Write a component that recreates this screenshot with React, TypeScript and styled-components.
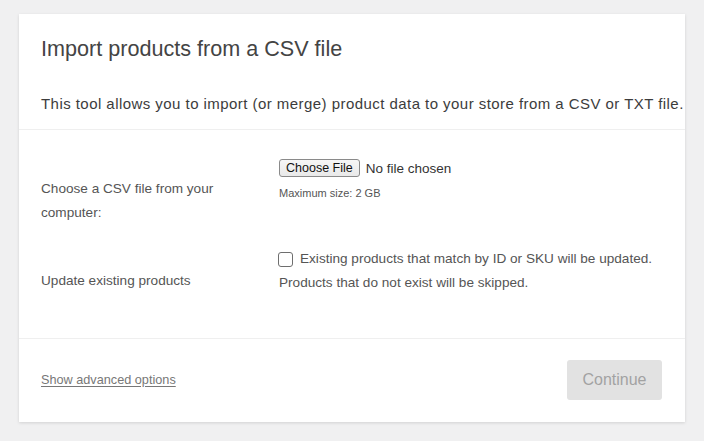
import * as React from 'react'
import styled, { createGlobalStyle } from 'styled-components'

const GlobalStyle = createGlobalStyle`
  html, body {
    margin: 0;
    padding: 0;
    background: #f0f0f1;
    font-family: "Liberation Sans", Arial, sans-serif;
    color: #444;
  }
  * { box-sizing: border-box; }
`

const Page = styled.div`
  padding: 14px 19px 18px;
`

const Card = styled.div`
  background: #fff;
  box-shadow: 0 1px 3px rgba(0, 0, 0, 0.13);
`

const Header = styled.header`
  padding: 21px 22px 0;
  border-bottom: 1px solid #efefef;
`

const Title = styled.h2`
  margin: 0;
  font-size: 21.6px;
  font-weight: 400;
  line-height: 28px;
  color: #444;
`

const Intro = styled.p`
  margin: 30px 0 0;
  padding-bottom: 14px;
  font-size: 15px;
  letter-spacing: 0.45px;
  line-height: 22px;
  color: #3c3c3c;
  white-space: nowrap;
`

const Section = styled.section`
  display: grid;
  grid-template-columns: 238px 1fr;
  row-gap: 22px;
  align-items: start;
  padding: 29px 22px 43px;
`

const Label = styled.label<{ $offset: number }>`
  padding-top: ${p => p.$offset}px;
  width: 180px;
  font-size: 13.6px;
  line-height: 24px;
  color: #555;
`

const Field = styled.div`
  display: flex;
  flex-direction: column;
  font-size: 13.6px;
  color: #555;
`

const FileRow = styled.div`
  display: flex;
  align-items: center;
  gap: 6px;
  height: 18px;
`

const FileButton = styled.button`
  height: 18px;
  padding: 0 6px;
  border: 1px solid #8a8a8a;
  border-radius: 3px;
  background: linear-gradient(#f6f6f6, #e9e9e9);
  font-family: inherit;
  font-size: 12.5px;
  line-height: 16px;
  color: #111;
`

const FileName = styled.span`
  font-size: 13.5px;
  color: #333;
`

const Hint = styled.span`
  margin-top: 9px;
  font-size: 11px;
  line-height: 14px;
  color: #555;
`

const CheckLine = styled.label`
  display: flex;
  align-items: center;
  gap: 7px;
  height: 24px;
  line-height: 24px;
  white-space: nowrap;
`

const Box = styled.span`
  width: 15px;
  height: 15px;
  margin-left: -1px;
  border: 1px solid #6e6e6e;
  border-radius: 3px;
  background: #fff;
  flex: none;
`

const Line = styled.span`
  line-height: 24px;
`

const Footer = styled.footer`
  display: flex;
  align-items: center;
  justify-content: space-between;
  padding: 21px 23px 22px 22px;
  border-top: 1px solid #efefef;
`

const AdvancedLink = styled.a`
  font-size: 12.7px;
  color: #777;
  text-decoration: underline;
  text-underline-offset: 2px;
`

const ContinueButton = styled.button`
  width: 95px;
  height: 40px;
  border: none;
  border-radius: 3px;
  background: #e2e2e2;
  font-family: inherit;
  font-size: 16px;
  color: #a2a2a2;
`

export default function App() {
  return (
    <>
      <GlobalStyle />
      <Page>
        <Card>
          <Header>
            <Title>Import products from a CSV file</Title>
            <Intro>
              This tool allows you to import (or merge) product data to your store from a CSV or TXT file.
            </Intro>
          </Header>
          <Section>
            <Label $offset={18}>Choose a CSV file from your computer:</Label>
            <Field>
              <FileRow>
                <FileButton type="button">Choose File</FileButton>
                <FileName>No file chosen</FileName>
              </FileRow>
              <Hint>Maximum size: 2 GB</Hint>
            </Field>
            <Label $offset={22}>Update existing products</Label>
            <Field>
              <CheckLine>
                <Box />
                Existing products that match by ID or SKU will be updated.
              </CheckLine>
              <Line>Products that do not exist will be skipped.</Line>
            </Field>
          </Section>
          <Footer>
            <AdvancedLink href="#">Show advanced options</AdvancedLink>
            <ContinueButton type="button" disabled>Continue</ContinueButton>
          </Footer>
        </Card>
      </Page>
    </>
  )
}
